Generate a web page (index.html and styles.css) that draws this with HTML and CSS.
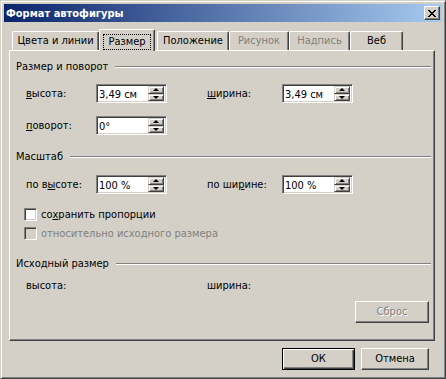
FILE: index.html
```html
<!DOCTYPE html>
<html lang="ru">
<head>
  <meta charset="UTF-8">
  <title>Формат автофигуры</title>
  <link rel="stylesheet" href="styles.css">
</head>
<body>
  <div class="window">
    <div class="titlebar">
      <span class="title">Формат автофигуры</span>
      <span class="close-btn">
        <svg width="8" height="7" viewBox="0 0 8 7" shape-rendering="crispEdges">
          <path d="M0 0h2v1H0zM6 0h2v1H6zM1 1h2v1H1zM5 1h2v1H5zM2 2h4v1H2zM3 3h2v1H3zM2 4h4v1H2zM1 5h2v1H1zM5 5h2v1H5zM0 6h2v1H0zM6 6h2v1H6z" fill="#000"/>
        </svg>
      </span>
    </div>

    <div class="client">
      <div class="tabs">
        <div class="tab tab-colors">Цвета и линии</div>
        <div class="tab tab-size active"><span class="focus">Размер</span></div>
        <div class="tab tab-pos">Положение</div>
        <div class="tab tab-pic disabled">Рисунок</div>
        <div class="tab tab-text disabled">Надпись</div>
        <div class="tab tab-web">Веб</div>
      </div>

      <div class="panel">
        <div class="group-title"><span>Размер и поворот</span><i class="rule"></i></div>
        <div class="row row-first">
          <span class="label"><u>в</u>ысота:</span>
          <div class="spin"><span class="value">3,49 см</span><span class="arrows"><b class="up"></b><b class="down"></b></span></div>
          <span class="label label-2"><u>ш</u>ирина:</span>
          <div class="spin"><span class="value">3,49 см</span><span class="arrows"><b class="up"></b><b class="down"></b></span></div>
        </div>
        <div class="row row-second">
          <span class="label"><u>п</u>оворот:</span>
          <div class="spin"><span class="value">0°</span><span class="arrows"><b class="up"></b><b class="down"></b></span></div>
        </div>

        <div class="group-title group-scale"><span>Масштаб</span><i class="rule"></i></div>
        <div class="row row-scale">
          <span class="label">по в<u>ы</u>соте:</span>
          <div class="spin"><span class="value">100 %</span><span class="arrows"><b class="up"></b><b class="down"></b></span></div>
          <span class="label label-2">по ши<u>р</u>ине:</span>
          <div class="spin"><span class="value">100 %</span><span class="arrows"><b class="up"></b><b class="down"></b></span></div>
        </div>
        <div class="check check-first">
          <span class="box"></span>
          <span>со<u>х</u>ранить пропорции</span>
        </div>
        <div class="check check-second disabled">
          <span class="box"></span>
          <span>относительно исходного размера</span>
        </div>

        <div class="group-title group-orig"><span>Исходный размер</span><i class="rule"></i></div>
        <div class="row row-info">
          <span class="label">высота:</span>
          <span class="spacer"></span>
          <span class="label label-2">ширина:</span>
        </div>
        <div class="reset-row">
          <div class="btn btn-reset">Сброс</div>
        </div>
      </div>

      <div class="buttons">
        <div class="btn btn-ok">ОК</div>
        <div class="btn btn-cancel">Отмена</div>
      </div>
    </div>
  </div>
</body>
</html>
```

FILE: styles.css
```css
* {
  box-sizing: border-box;
}
body {
  margin: 0;
  background: #d4d0c8;
  font-family: "DejaVu Sans Condensed", "DejaVu Sans", sans-serif;
  font-size: 11px;
  color: #000;
}
.window {
  width: 446px;
  height: 379px;
  background: #d4d0c8;
  border: 1px solid;
  border-color: #d4d0c8 #404040 #404040 #d4d0c8;
  box-shadow: inset 1px 1px #fff, inset -1px -1px #808080;
  padding: 3px;
  display: flex;
  flex-direction: column;
}
.titlebar {
  height: 18px;
  background: linear-gradient(to right, #0a246a, #a6caf0);
  display: flex;
  align-items: center;
  padding-left: 2px;
  color: #fff;
  font-weight: bold;
}
.close-btn {
  margin-left: auto;
  margin-right: 2px;
  width: 16px;
  height: 14px;
  background: #d4d0c8;
  border: 1px solid;
  border-color: #fff #404040 #404040 #fff;
  box-shadow: inset -1px -1px #808080;
  display: flex;
  align-items: center;
  justify-content: center;
  padding-right: 1px;
}
.close-btn svg {
  display: block;
}
.client {
  padding: 7px 7px 0 5px;
}

/* tabs */
.tabs {
  display: flex;
  align-items: flex-end;
  height: 21px;
}
.tab {
  height: 19px;
  background: #d4d0c8;
  border-top: 1px solid #fff;
  border-left: 1px solid #fff;
  border-right: 1px solid #404040;
  box-shadow: inset -1px 0 #808080;
  border-radius: 2px 2px 0 0;
  text-align: center;
  line-height: 17px;
}
.tab.disabled {
  color: #808080;
}
.tab-colors { margin-left: 3px; width: 87px; }
.tab-size { width: 56px; }
.tab-pos { margin-left: 2px; width: 72px; }
.tab-pic { width: 60px; }
.tab-text { width: 61px; }
.tab-web { width: 53px; }
.tab.active {
  height: 22px;
  margin-bottom: -1px;
  position: relative;
  z-index: 1;
  padding-top: 3px;
}
.focus {
  display: inline-block;
  border: 1px dotted #000;
  width: 48px;
  height: 16px;
  line-height: 14px;
}

/* panel */
.panel {
  height: 291px;
  border: 1px solid;
  border-color: #fff #404040 #404040 #fff;
  box-shadow: inset -1px -1px #808080;
  padding: 9px 3px 0 6px;
}
.group-title {
  display: flex;
  align-items: center;
  height: 14px;
  line-height: 14px;
}
.group-title .rule {
  flex: 1;
  margin-left: 7px;
  border-top: 1px solid #808080;
  border-bottom: 1px solid #fff;
}
.group-scale { margin-top: 15px; }
.group-orig { margin-top: 17px; }

.row {
  display: flex;
  align-items: center;
  height: 19px;
  padding-left: 10px;
}
.row-first { margin-top: 10px; }
.row-second { margin-top: 13px; }
.row-scale { margin-top: 11px; }
.row-info { margin-top: 7px; height: 14px; }
.label {
  width: 70px;
}
.label-2 {
  margin-left: 40px;
  width: 75px;
}
.spacer {
  width: 71px;
}
.spin {
  width: 71px;
  height: 19px;
  background: #fff;
  border: 1px solid;
  border-color: #808080 #fff #fff #808080;
  box-shadow: inset 1px 1px #404040, inset -1px -1px #d4d0c8;
  padding: 1px 2px 1px 2px;
  display: flex;
  align-items: center;
}
.spin .value {
  flex: 1;
  padding-top: 1px;
}
.arrows {
  width: 16px;
  height: 15px;
  display: flex;
  flex-direction: column;
}
.arrows b {
  flex: 1;
  background: #d4d0c8;
  border: 1px solid;
  border-color: #d4d0c8 #404040 #404040 #d4d0c8;
  box-shadow: inset 1px 1px #fff, inset -1px -1px #808080;
  display: flex;
  align-items: center;
  justify-content: center;
}
.arrows b::after {
  content: "";
  border-left: 3px solid transparent;
  border-right: 3px solid transparent;
}
.arrows .up::after {
  border-bottom: 3px solid #000;
}
.arrows .down::after {
  border-top: 3px solid #000;
}

/* checkboxes */
.check {
  display: flex;
  align-items: center;
  height: 13px;
  padding-left: 8px;
}
.check-first { margin-top: 14px; }
.check-second { margin-top: 6px; }
.check .box {
  width: 13px;
  height: 13px;
  background: #fff;
  border: 1px solid;
  border-color: #808080 #fff #fff #808080;
  box-shadow: inset 1px 1px #404040, inset -1px -1px #d4d0c8;
  margin-right: 4px;
}
.check.disabled {
  color: #808080;
}
.check.disabled .box {
  background: #d4d0c8;
}

/* buttons */
.reset-row {
  display: flex;
  justify-content: flex-end;
  margin-top: 9px;
  padding-right: 2px;
}
.btn {
  height: 22px;
  background: #d4d0c8;
  border: 1px solid;
  border-color: #fff #404040 #404040 #fff;
  box-shadow: inset -1px -1px #808080;
  text-align: center;
  line-height: 20px;
}
.btn-reset {
  width: 74px;
  color: #808080;
  text-shadow: 1px 1px #fff;
}
.buttons {
  display: flex;
  margin-top: 7px;
  padding-left: 273px;
}
.btn-ok {
  width: 73px;
  border-color: #000;
  box-shadow: inset 1px 1px #fff, inset -1px -1px #404040, inset -2px -2px #808080;
}
.btn-cancel {
  width: 68px;
  margin-left: 6px;
}
```
